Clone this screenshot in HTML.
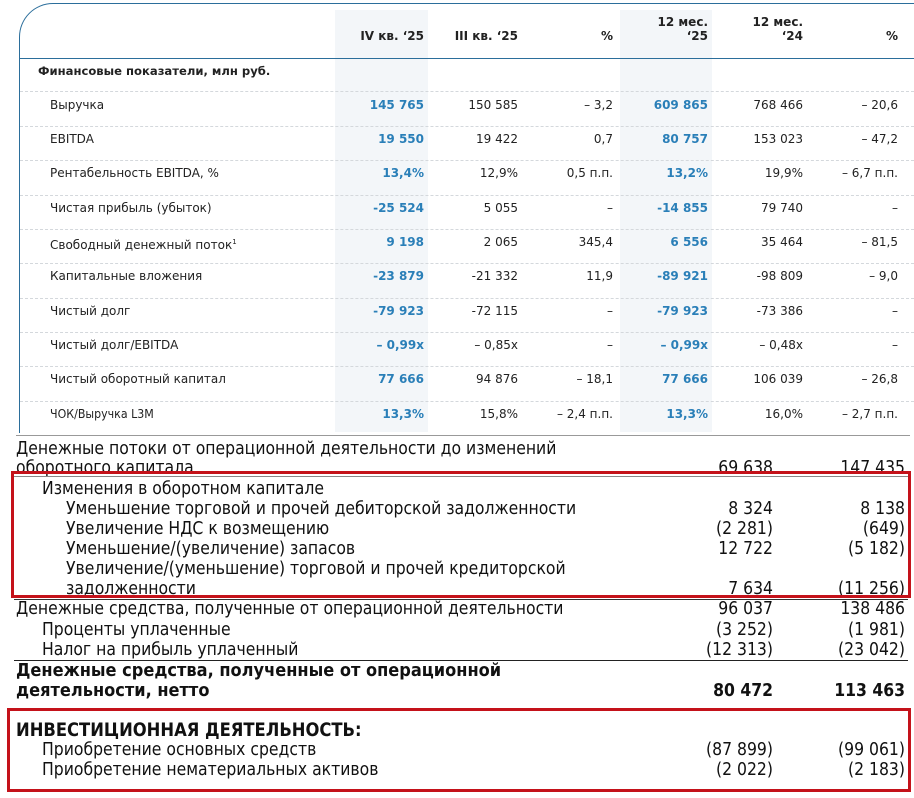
<!DOCTYPE html>
<html><head><meta charset="utf-8"><style>
body{margin:0;width:914px;height:798px;background:#fff;position:relative;overflow:hidden;font-family:"DejaVu Sans",Verdana,sans-serif;}
.panel{position:absolute;left:19px;top:3px;width:920px;height:450px;border-left:1.5px solid #2b6e9b;border-top:1.5px solid #2b6e9b;border-top-left-radius:34px;}
.hl{position:absolute;top:10px;height:422px;background:#f3f6f9;}
.hd{position:absolute;top:58px;left:20px;width:894px;height:0;border-top:1.5px solid #2b6e9b;}
.t{position:absolute;font-size:12px;color:#222;white-space:nowrap;line-height:14px;}
.r{text-align:right;width:100px;}
.b{font-weight:bold;}
.bl{color:#2a7fb8;font-weight:bold;}
.sep{position:absolute;left:20px;width:894px;border-top:1px dashed #d4d8dc;}
.s{position:absolute;font-family:"Liberation Sans Narrow","DejaVu Sans Condensed","Liberation Sans",sans-serif;font-size:17.4px;line-height:20px;white-space:nowrap;color:#111;}
.n{text-align:right;width:120px;}
.box{position:absolute;border:3px solid #c4121a;}
.ln{position:absolute;height:0;}
</style></head><body>
<div class="panel"></div>
<div class="hl" style="left:335px;width:93px"></div>
<div class="hl" style="left:620px;width:92px"></div>
<div class="hd"></div>
<div class="t b r" style="left:324px;top:29px">IV кв. ‘25</div>
<div class="t b r" style="left:418px;top:29px">III кв. ‘25</div>
<div class="t b r" style="left:513px;top:29px">%</div>
<div class="t b r" style="left:608px;top:15px">12 мес.<br>‘25</div>
<div class="t b r" style="left:703px;top:15px">12 мес.<br>‘24</div>
<div class="t b r" style="left:798px;top:29px">%</div>
<div class="t b" style="left:38px;top:64px;font-size:11.6px">Финансовые показатели, млн руб.</div>

<div class="sep" style="top:91px"></div><div class="sep" style="top:126px"></div><div class="sep" style="top:160px"></div><div class="sep" style="top:195px"></div><div class="sep" style="top:229px"></div><div class="sep" style="top:263px"></div><div class="sep" style="top:298px"></div><div class="sep" style="top:332px"></div><div class="sep" style="top:366px"></div><div class="sep" style="top:401px"></div>

<div class="t" style="left:50px;top:98px">Выручка</div>
<div class="t bl r" style="left:324px;top:98px">145 765</div><div class="t r" style="left:418px;top:98px">150 585</div><div class="t r" style="left:513px;top:98px">– 3,2</div><div class="t bl r" style="left:608px;top:98px">609 865</div><div class="t r" style="left:703px;top:98px">768 466</div><div class="t r" style="left:798px;top:98px">– 20,6</div>

<div class="t" style="left:50px;top:132px">EBITDA</div>
<div class="t bl r" style="left:324px;top:132px">19 550</div><div class="t r" style="left:418px;top:132px">19 422</div><div class="t r" style="left:513px;top:132px">0,7</div><div class="t bl r" style="left:608px;top:132px">80 757</div><div class="t r" style="left:703px;top:132px">153 023</div><div class="t r" style="left:798px;top:132px">– 47,2</div>

<div class="t" style="left:50px;top:166px">Рентабельность EBITDA, %</div>
<div class="t bl r" style="left:324px;top:166px">13,4%</div><div class="t r" style="left:418px;top:166px">12,9%</div><div class="t r" style="left:513px;top:166px">0,5 п.п.</div><div class="t bl r" style="left:608px;top:166px">13,2%</div><div class="t r" style="left:703px;top:166px">19,9%</div><div class="t r" style="left:798px;top:166px">– 6,7 п.п.</div>

<div class="t" style="left:50px;top:201px">Чистая прибыль (убыток)</div>
<div class="t bl r" style="left:324px;top:201px">-25 524</div><div class="t r" style="left:418px;top:201px">5 055</div><div class="t r" style="left:513px;top:201px">–</div><div class="t bl r" style="left:608px;top:201px">-14 855</div><div class="t r" style="left:703px;top:201px">79 740</div><div class="t r" style="left:798px;top:201px">–</div>

<div class="t" style="left:50px;top:235px">Свободный денежный поток<sup style="font-size:7px">1</sup></div>
<div class="t bl r" style="left:324px;top:235px">9 198</div><div class="t r" style="left:418px;top:235px">2 065</div><div class="t r" style="left:513px;top:235px">345,4</div><div class="t bl r" style="left:608px;top:235px">6 556</div><div class="t r" style="left:703px;top:235px">35 464</div><div class="t r" style="left:798px;top:235px">– 81,5</div>

<div class="t" style="left:50px;top:269px">Капитальные вложения</div>
<div class="t bl r" style="left:324px;top:269px">-23 879</div><div class="t r" style="left:418px;top:269px">-21 332</div><div class="t r" style="left:513px;top:269px">11,9</div><div class="t bl r" style="left:608px;top:269px">-89 921</div><div class="t r" style="left:703px;top:269px">-98 809</div><div class="t r" style="left:798px;top:269px">– 9,0</div>

<div class="t" style="left:50px;top:304px">Чистый долг</div>
<div class="t bl r" style="left:324px;top:304px">-79 923</div><div class="t r" style="left:418px;top:304px">-72 115</div><div class="t r" style="left:513px;top:304px">–</div><div class="t bl r" style="left:608px;top:304px">-79 923</div><div class="t r" style="left:703px;top:304px">-73 386</div><div class="t r" style="left:798px;top:304px">–</div>

<div class="t" style="left:50px;top:338px">Чистый долг/EBITDA</div>
<div class="t bl r" style="left:324px;top:338px">– 0,99x</div><div class="t r" style="left:418px;top:338px">– 0,85x</div><div class="t r" style="left:513px;top:338px">–</div><div class="t bl r" style="left:608px;top:338px">– 0,99x</div><div class="t r" style="left:703px;top:338px">– 0,48x</div><div class="t r" style="left:798px;top:338px">–</div>

<div class="t" style="left:50px;top:372px">Чистый оборотный капитал</div>
<div class="t bl r" style="left:324px;top:372px">77 666</div><div class="t r" style="left:418px;top:372px">94 876</div><div class="t r" style="left:513px;top:372px">– 18,1</div><div class="t bl r" style="left:608px;top:372px">77 666</div><div class="t r" style="left:703px;top:372px">106 039</div><div class="t r" style="left:798px;top:372px">– 26,8</div>

<div class="t" style="left:50px;top:407px;transform:scaleX(.92);transform-origin:left">ЧОК/Выручка L3M</div>
<div class="t bl r" style="left:324px;top:407px">13,3%</div><div class="t r" style="left:418px;top:407px">15,8%</div><div class="t r" style="left:513px;top:407px">– 2,4 п.п.</div><div class="t bl r" style="left:608px;top:407px">13,3%</div><div class="t r" style="left:703px;top:407px">16,0%</div><div class="t r" style="left:798px;top:407px">– 2,7 п.п.</div>

<div style="position:absolute;left:0;top:433px;width:914px;height:365px;background:#fff"></div>
<div class="ln" style="left:16px;top:435px;width:894px;border-top:1px solid #999"></div>

<div class="s" style="left:16px;top:439px">Денежные потоки от операционной деятельности до изменений</div>
<div class="s" style="left:16px;top:458px">оборотного капитала</div>
<div class="s n" style="left:653px;top:458px">69 638</div><div class="s n" style="left:785px;top:458px">147 435</div>
<div class="ln" style="left:14px;top:476px;width:894px;border-top:1.5px solid #888"></div>
<div class="s" style="left:42px;top:479px">Изменения в оборотном капитале</div>
<div class="s" style="left:66px;top:499px">Уменьшение торговой и прочей дебиторской задолженности</div>
<div class="s n" style="left:653px;top:499px">8 324</div><div class="s n" style="left:785px;top:499px">8 138</div>
<div class="s" style="left:66px;top:519px">Увеличение НДС к возмещению</div>
<div class="s n" style="left:653px;top:519px">(2 281)</div><div class="s n" style="left:785px;top:519px">(649)</div>
<div class="s" style="left:66px;top:539px">Уменьшение/(увеличение) запасов</div>
<div class="s n" style="left:653px;top:539px">12 722</div><div class="s n" style="left:785px;top:539px">(5 182)</div>
<div class="s" style="left:66px;top:559px">Увеличение/(уменьшение) торговой и прочей кредиторской</div>
<div class="s" style="left:66px;top:579px">задолженности</div>
<div class="s n" style="left:653px;top:579px">7 634</div><div class="s n" style="left:785px;top:579px">(11 256)</div>
<div class="box" style="left:11px;top:471px;width:894px;height:121px"></div>
<div class="ln" style="left:14px;top:599px;width:894px;border-top:1.5px solid #333"></div>
<div class="s" style="left:16px;top:599px">Денежные средства, полученные от операционной деятельности</div>
<div class="s n" style="left:653px;top:599px">96 037</div><div class="s n" style="left:785px;top:599px">138 486</div>
<div class="s" style="left:42px;top:620px">Проценты уплаченные</div>
<div class="s n" style="left:653px;top:620px">(3 252)</div><div class="s n" style="left:785px;top:620px">(1 981)</div>
<div class="s" style="left:42px;top:640px">Налог на прибыль уплаченный</div>
<div class="s n" style="left:653px;top:640px">(12 313)</div><div class="s n" style="left:785px;top:640px">(23 042)</div>
<div class="ln" style="left:14px;top:660px;width:894px;border-top:1.5px solid #222"></div>
<div class="s b" style="left:16px;top:661px;font-size:18px">Денежные средства, полученные от операционной</div>
<div class="s b" style="left:16px;top:681px;font-size:18px">деятельности, нетто</div>
<div class="s n b" style="left:653px;top:681px">80 472</div><div class="s n b" style="left:785px;top:681px">113 463</div>
<div class="box" style="left:7px;top:708px;width:898px;height:78px"></div>
<div class="s b" style="left:16px;top:721px;font-size:18.2px">ИНВЕСТИЦИОННАЯ ДЕЯТЕЛЬНОСТЬ:</div>
<div class="s" style="left:42px;top:740px">Приобретение основных средств</div>
<div class="s n" style="left:653px;top:740px">(87 899)</div><div class="s n" style="left:785px;top:740px">(99 061)</div>
<div class="s" style="left:42px;top:760px">Приобретение нематериальных активов</div>
<div class="s n" style="left:653px;top:760px">(2 022)</div><div class="s n" style="left:785px;top:760px">(2 183)</div>
</body></html>
